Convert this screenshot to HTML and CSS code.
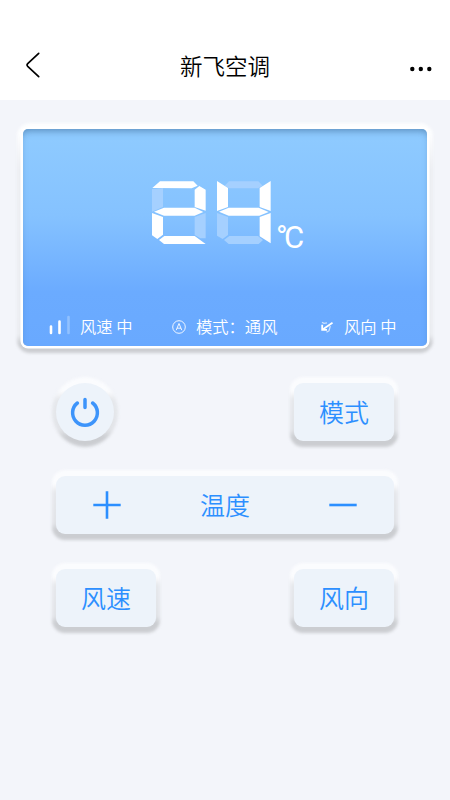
FILE: index.html
```html
<!DOCTYPE html>
<html lang="zh-CN">
<head>
<meta charset="utf-8">
<title>新飞空调</title>
<link rel="stylesheet" href="styles.css">
</head>
<body>
<header class="header">
  <svg class="back" viewBox="0 0 16 28"><path d="M13.7 2.3 2.7 12.7Q1.4 14 2.7 15.3L13.7 25.7"/></svg>
  <h1 class="title">新飞空调</h1>
  <svg class="more" viewBox="0 0 24 6"><circle cx="3.3" cy="3" r="2.2"/><circle cx="11.8" cy="3" r="2.2"/><circle cx="20.3" cy="3" r="2.2"/></svg>
</header>
<main class="main">
  <section class="display">
    <div class="reading">
      <svg class="digits" viewBox="33 45 363 195">
        <g class="off">
          <path d="M36 72 69 70V126L36 140ZM164 156 197 144V220L181 220 164 210ZM254 62 267 49H355L368 62 355 70H267ZM231 144 264 156V210L248 222 231 212ZM252 225 268 213H354L369 225 356 237H266Z"/>
        </g>
        <g class="on">
          <path d="M37 69 60 49H160L173 62 155 70ZM178 63 197 74V137L164 126V74ZM42 140 72 128H164L190 141 164 152H72ZM36 144 69 156V209L52 222 36 211ZM57 225 73 213H164L197 237H72ZM231 48 264 69V126L231 138ZM392 48V138L359 126V69ZM237 140 266 128H356L386 141 358 152H266ZM359 156 392 144V235L359 214Z"/>
        </g>
      </svg>
      <span class="unit">°C</span>
    </div>
    <div class="status">
      <div class="item speed">
        <svg class="bars" viewBox="0 0 22 20"><path d="M2 11.5V18M10.5 6.5V18"/><path class="dim" d="M19.5 2V18"/></svg>
        <span>风速 中</span>
      </div>
      <div class="item mode">
        <svg class="auto" viewBox="0 0 14 14"><circle cx="7" cy="7" r="6.3"/><path d="M4.2 10.2 7 3.5 9.8 10.2M5.1 8.2H8.9"/></svg>
        <span>模式：通风</span>
      </div>
      <div class="item swing">
        <svg class="arrow" viewBox="0 0 14 14"><path class="shaft" d="M12.5 2.8 3 9.3"/><path class="shaft" d="M2.2 4.8V9.8H7"/><path class="faint" d="M2 2.2 4 3.3 7 2.8M10.3 6 9 10.8 6.5 12.3"/></svg>
        <span>风向 中</span>
      </div>
    </div>
  </section>
  <section class="controls">
    <button class="key power" aria-label="电源">
      <svg viewBox="0 0 30 30"><path d="M7.4 6A12.4 12.4 0 1 0 22.6 6M15 2.5V10.5"/></svg>
    </button>
    <button class="key">模式</button>
    <div class="key temperature">
      <svg viewBox="0 0 28 28"><path d="M.3 14H27.7M14 .3V27.7"/></svg>
      <span>温度</span>
      <svg viewBox="0 0 28 28"><path d="M.3 14H27.7"/></svg>
    </div>
    <button class="key">风速</button>
    <button class="key">风向</button>
  </section>
</main>
</body>
</html>
```
FILE: styles.css
```css
* { box-sizing: border-box; }
body {
  margin: 0;
  min-height: 800px;
  background: #f3f5fa;
  font-family: "Noto Sans CJK SC", sans-serif;
}
svg { display: block; fill: none; flex: none; }
.header {
  height: 100px;
  padding: 30px 17px 0 25px;
  background: #fff;
  display: grid;
  grid-template-columns: 60px 1fr 60px;
  align-items: center;
}
.back { width: 16px; height: 28px; stroke: #000; stroke-width: 1.7; stroke-linecap: round; }
.title { margin: 0 0 0 -8px; text-align: center; font-size: 22.5px; font-weight: 350; line-height: 32px; color: #000; }
.more { width: 24px; height: 6px; fill: #000; justify-self: end; margin-top: 7px; }
.main { padding: 29px 23px 0; isolation: isolate; }
.display {
  position: relative;
  height: 217px;
  border-radius: 5px;
  padding-top: 51px;
  color: #fff;
  background: linear-gradient(#8fcbff, #85c2ff 40%, #6babff 75%, #69a9ff);
  box-shadow: inset 0 5px 7px -3px rgba(65, 110, 155, .65), 0 0 0 2.5px #fff;
}
.display::before,
.key::before {
  content: "";
  position: absolute;
  z-index: -1;
  inset: -6px -4px -5.5px;
  border-radius: 13px;
  background: linear-gradient(#fbfcfe 20%, #e6e8ec 32%, #e1e3e7 76%, #cbcdd1 86%);
  filter: blur(1.5px);
}
.display::before {
  inset: -6px -6px -7px;
  background: linear-gradient(#fcfdfe 5%, #eceef2 20%, #eaecf0 92%, #cbcdd1 96%);
}
.reading { display: flex; margin-left: 128px; height: 70px; }
.digits { width: 121px; height: 65px; }
.unit { margin: 40px 0 0 4px; font: 400 31px/35px Roboto, sans-serif; letter-spacing: -3.5px; }
.digits .on { fill: #fff; }
.digits .off { fill: #a5d0ff; }
.status { display: flex; height: 24px; margin-top: 64px; font-size: 16.3px; font-weight: 350; line-height: 24px; white-space: pre; }
.item { display: flex; align-items: center; }
.speed { width: 122px; padding-left: 26px; gap: 9px; }
.mode { width: 148px; padding-left: 27px; gap: 10px; }
.swing { padding-left: 27px; gap: 10px; }
.bars { width: 22px; height: 20px; margin-top: -3px; stroke: #fff; stroke-width: 2.6; stroke-linecap: round; }
.bars .dim { stroke: #91c1ff; }
.auto { width: 14px; height: 14px; margin-top: 2px; stroke: #fff; stroke-width: .9; }
.arrow { width: 14px; height: 14px; margin-top: 2px; stroke: #fff; }
.shaft { stroke-width: 1.8; }
.faint { stroke-width: 1.3; opacity: .65; }
.controls {
  display: grid;
  grid-template-columns: 100px 100px;
  grid-template-rows: 58px 58px 58px;
  justify-content: space-between;
  row-gap: 35px;
  padding: 37px 33px 0;
}
.key {
  position: relative;
  height: 58px;
  border: 0;
  padding: 0;
  border-radius: 9px;
  background: #edf3fa;
  color: #2c8fff;
  font: 350 25px/56px "Noto Sans CJK SC", sans-serif;
  text-align: center;
}
.key:not(.power):not(.temperature) { padding-bottom: 2px; }
.power { width: 58px; border-radius: 50%; display: flex; align-items: center; justify-content: center; }
.power::before { border-radius: 50%; }
.power svg { width: 30px; height: 30px; stroke: #3d94fa; stroke-width: 3.5; stroke-linecap: round; }
.temperature { grid-column: 1 / 3; display: flex; align-items: center; justify-content: space-between; padding: 0 37px; }
.temperature span { padding-bottom: 2px; }
.temperature svg { width: 28px; height: 28px; stroke: #2c8fff; stroke-width: 2.6; }
```
